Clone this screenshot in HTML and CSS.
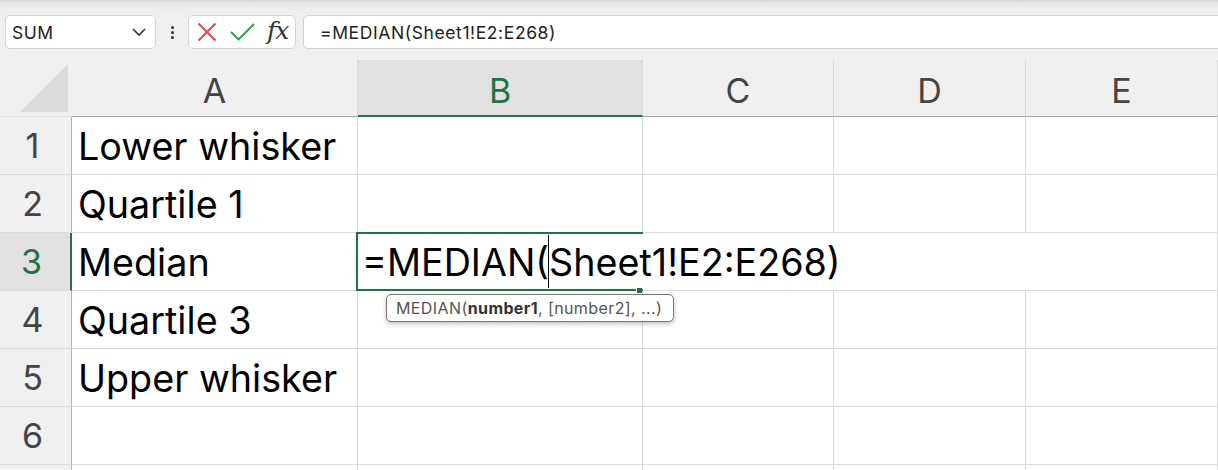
FILE: index.html
```html
<!DOCTYPE html>
<html>
<head>
<meta charset="utf-8">
<link rel="stylesheet" href="styles.css">
</head>
<body>
<div class="toolbar">
  <div class="namebox">
    <span class="name">SUM</span>
    <svg class="chev" width="16" height="10" viewBox="0 0 16 10"><path d="M2 2 L8 8 L14 2" fill="none" stroke="#333" stroke-width="1.6"/></svg>
  </div>
  <div class="dots"><i></i><i></i><i></i></div>
  <div class="fxbox">
    <svg class="ico" width="20" height="20" viewBox="0 0 20 20"><path d="M1.5 1.5 L18.5 18.5 M18.5 1.5 L1.5 18.5" stroke="#e5484d" stroke-width="2" fill="none"/></svg>
    <svg class="ico" width="25" height="18" viewBox="0 0 25 18"><path d="M1 9 L8.5 16.5 L24 1" stroke="#34a052" stroke-width="2" fill="none"/></svg>
    <span class="fx">fx</span>
  </div>
  <div class="formula">=MEDIAN(Sheet1!E2:E268)</div>
</div>
<div class="sheet">
  <div class="corner"><span class="tri"></span></div>
  <div class="ch">A</div>
  <div class="ch sel">B</div>
  <div class="ch">C</div>
  <div class="ch">D</div>
  <div class="ch">E</div>

  <div class="rh">1</div>
  <div class="c">Lower whisker</div><div class="c"></div><div class="c"></div><div class="c"></div><div class="c"></div>

  <div class="rh">2</div>
  <div class="c">Quartile 1</div><div class="c"></div><div class="c"></div><div class="c"></div><div class="c"></div>

  <div class="rh sel">3</div>
  <div class="c a3">Median</div>
  <div class="c active nb">
    <span class="edit">=MEDIAN(<span class="caret"></span>Sheet1!E2:E268)</span>
    <span class="selbox"></span><span class="handle"></span>
    <div class="tip">MEDIAN(<b>number1</b>, [number2], ...)</div>
  </div>
  <div class="c nb"></div><div class="c nb"></div><div class="c"></div>

  <div class="rh">4</div>
  <div class="c">Quartile 3</div><div class="c"></div><div class="c"></div><div class="c"></div><div class="c"></div>

  <div class="rh">5</div>
  <div class="c">Upper whisker</div><div class="c"></div><div class="c"></div><div class="c"></div><div class="c"></div>

  <div class="rh">6</div>
  <div class="c"></div><div class="c"></div><div class="c"></div><div class="c"></div><div class="c"></div>

  <div class="rh"></div>
  <div class="c"></div><div class="c"></div><div class="c"></div><div class="c"></div><div class="c"></div>
</div>
</body>
</html>
```
FILE: styles.css
```css
* { box-sizing: border-box; }
html, body { margin: 0; padding: 0; }
body {
  width: 1218px; height: 470px; overflow: hidden;
  background: #f0f0f0;
  font-family: "Inter", "Open Sans", sans-serif;
}
.toolbar {
  height: 60px;
  display: flex;
  align-items: flex-start;
  padding: 15px 0 0 5px;
  background: linear-gradient(#d8d8d8 0, #e6e6e6 3px, #ededed 8px, #f0f0f0 15px);
}
.namebox {
  width: 151px; height: 34px;
  background: #fff;
  border: 1px solid #d4d4d4;
  border-radius: 5px;
  display: flex; align-items: center; justify-content: space-between;
  padding: 0 8px 0 6px;
}
.name { font-size: 17.5px; letter-spacing: 0.5px; color: #222; }
.chev { display: block; }
.dots {
  width: 32px; height: 34px;
  display: flex; flex-direction: column; align-items: center; justify-content: center; gap: 2px;
}
.dots i { display: block; width: 3px; height: 3px; background: #333; border-radius: 50%; }
.fxbox {
  width: 108px; height: 34px;
  background: #fff;
  border: 1px solid #d4d4d4;
  border-radius: 5px;
  display: flex; align-items: center;
  padding-left: 8px;
}
.fxbox .ico { display: block; }
.fxbox .ico + .ico { margin-left: 13px; }
.fx {
  margin-left: 12px;
  font-family: "DejaVu Serif", "Liberation Serif", serif;
  font-style: italic;
  font-size: 25px;
  color: #333;
  line-height: 1;
  margin-top: -3px;
  letter-spacing: -1px;
}
.formula {
  flex: 1;
  margin-left: 7px;
  margin-right: -10px;
  height: 34px;
  background: #fff;
  border: 1px solid #d4d4d4;
  border-radius: 5px;
  font-size: 17.5px;
  letter-spacing: 0.6px;
  color: #222;
  display: flex; align-items: center;
  padding-left: 16px;
}
.sheet {
  display: grid;
  grid-template-columns: 72px 286px 285px 191px 192px 1fr;
  grid-template-rows: 57px repeat(6, 58px) 20px;
  background: #fff;
}
.corner {
  background: #f0f0f0;
  border-bottom: 1px solid #dedede;
  position: relative;
}
.tri {
  position: absolute; right: 4px; bottom: 4px;
  width: 0; height: 0;
  border-left: 48px solid transparent;
  border-bottom: 48px solid #dcdcdc;
}
.ch {
  background: #f0f0f0;
  border-right: 1px solid #d9d9d9;
  border-bottom: 1px solid #a8a8a8;
  display: flex; align-items: center; justify-content: center;
  font-size: 34px; color: #444;
  padding-top: 4px;
}
.ch.sel {
  background: #e1e1e1;
  color: #217346;
  border-bottom: 2px solid #217346;
  padding-top: 5px;
}
.rh {
  background: #f0f0f0;
  border-right: 1px solid #b4b4b4;
  border-bottom: 1px solid #dadada;
  display: flex; align-items: center; justify-content: center;
  font-size: 34px; color: #444;
  padding-right: 6px;
}
.rh.sel {
  background: #e1e1e1;
  color: #217346;
  border-right: 2px solid #217346;
  padding-right: 7px;
}
.c {
  border-right: 1px solid #dadada;
  border-bottom: 1px solid #dadada;
  display: flex; align-items: center;
  padding-left: 6px;
  font-size: 37.7px;
  color: #000;
  white-space: nowrap;
}
.c.nb { border-right-color: transparent; }
.active { position: relative; z-index: 2; overflow: visible; }
.edit { flex-shrink: 0; display: flex; align-items: center; margin-left: -2px; }
.caret {
  display: block;
  flex-shrink: 0;
  width: 1px; height: 53px;
  background: #000;
  margin: 0 0 0 -1px;
}
.selbox {
  position: absolute;
  left: -2px; top: -1px; right: -1px; bottom: -1px;
  border-left: 2px solid #217346;
  border-top: 2px solid #217346;
  border-bottom: 2px solid #217346;
  pointer-events: none;
}
.handle {
  position: absolute;
  right: 0; bottom: -3px;
  width: 6px; height: 5px;
  background: #217346;
  border-left: 1px solid #fff;
}
.tip {
  position: absolute;
  left: 28px; top: 61px;
  width: 288px; height: 28px;
  background: #fff;
  border: 1px solid #777;
  border-radius: 5px;
  box-shadow: 0 2px 5px rgba(0,0,0,0.25);
  font-size: 16px;
  letter-spacing: 0.4px;
  color: #555;
  display: flex; align-items: center;
  padding-left: 9px;
  white-space: nowrap;
}
.tip b { color: #333; font-weight: 700; }
```
